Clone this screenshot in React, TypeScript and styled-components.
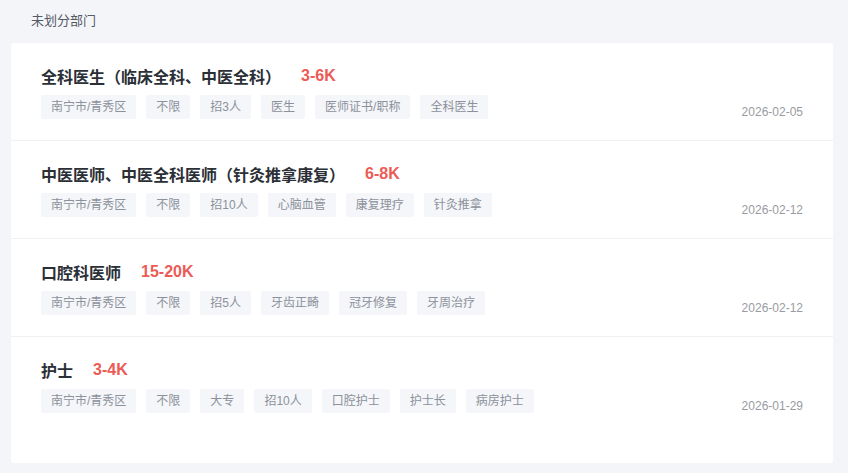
import React from "react";
import styled, { createGlobalStyle } from "styled-components";

const Global = createGlobalStyle`
  html, body { margin: 0; padding: 0; background: #f4f5f9; }
  body { font-family: "Liberation Sans", Arial, "Noto Sans CJK SC", sans-serif; }
`;

const Page = styled.div`
  width: 848px;
  height: 473px;
  box-sizing: border-box;
  padding: 0 15px 0 11px;
  background: #f4f5f9;
  overflow: hidden;
`;

const SectionTitle = styled.div`
  height: 43px;
  box-sizing: border-box;
  padding: 12px 0 0 20px;
  font-size: 13px;
  line-height: 17px;
  color: #555a63;
`;

const Card = styled.div`
  background: #fff;
  border-radius: 3px;
  height: 420px;
`;

const Row = styled.div<{ $last?: boolean }>`
  height: ${(p) => (p.$last ? 127 : 98)}px;
  box-sizing: border-box;
  padding: 22px 30px 0 30px;
  border-bottom: ${(p) => (p.$last ? "none" : "1px solid #f0f1f4")};
  display: flex;
  align-items: flex-start;
  justify-content: space-between;
`;

const Main = styled.div`
  display: flex;
  flex-direction: column;
`;

const TitleLine = styled.div`
  display: flex;
  align-items: center;
  gap: 20px;
  height: 21px;
  margin-bottom: 9px;
`;

const JobName = styled.span`
  font-size: 16px;
  font-weight: 700;
  color: #2b2f36;
`;

const Salary = styled.span`
  font-size: 16px;
  font-weight: 700;
  color: #ec5b56;
`;

const Tags = styled.div`
  display: flex;
  gap: 10px;
`;

const Tag = styled.span`
  height: 24px;
  line-height: 24px;
  padding: 0 10px;
  background: #f4f6f9;
  border-radius: 2px;
  font-size: 12px;
  color: #8c919b;
  white-space: nowrap;
`;

const DateText = styled.span`
  margin-top: 40px;
  font-size: 12px;
  line-height: 14px;
  color: #999ba1;
`;

const jobs = [
  {
    name: "全科医生（临床全科、中医全科）",
    salary: "3-6K",
    tags: ["南宁市/青秀区", "不限", "招3人", "医生", "医师证书/职称", "全科医生"],
    date: "2026-02-05",
  },
  {
    name: "中医医师、中医全科医师（针灸推拿康复）",
    salary: "6-8K",
    tags: ["南宁市/青秀区", "不限", "招10人", "心脑血管", "康复理疗", "针灸推拿"],
    date: "2026-02-12",
  },
  {
    name: "口腔科医师",
    salary: "15-20K",
    tags: ["南宁市/青秀区", "不限", "招5人", "牙齿正畸", "冠牙修复", "牙周治疗"],
    date: "2026-02-12",
  },
  {
    name: "护士",
    salary: "3-4K",
    tags: ["南宁市/青秀区", "不限", "大专", "招10人", "口腔护士", "护士长", "病房护士"],
    date: "2026-01-29",
  },
];

export default function App() {
  return (
    <>
      <Global />
      <Page>
        <SectionTitle>未划分部门</SectionTitle>
        <Card>
          {jobs.map((j, i) => (
            <Row key={i} $last={i === jobs.length - 1}>
              <Main>
                <TitleLine>
                  <JobName>{j.name}</JobName>
                  <Salary>{j.salary}</Salary>
                </TitleLine>
                <Tags>
                  {j.tags.map((t) => (
                    <Tag key={t}>{t}</Tag>
                  ))}
                </Tags>
              </Main>
              <DateText>{j.date}</DateText>
            </Row>
          ))}
        </Card>
      </Page>
    </>
  );
}
